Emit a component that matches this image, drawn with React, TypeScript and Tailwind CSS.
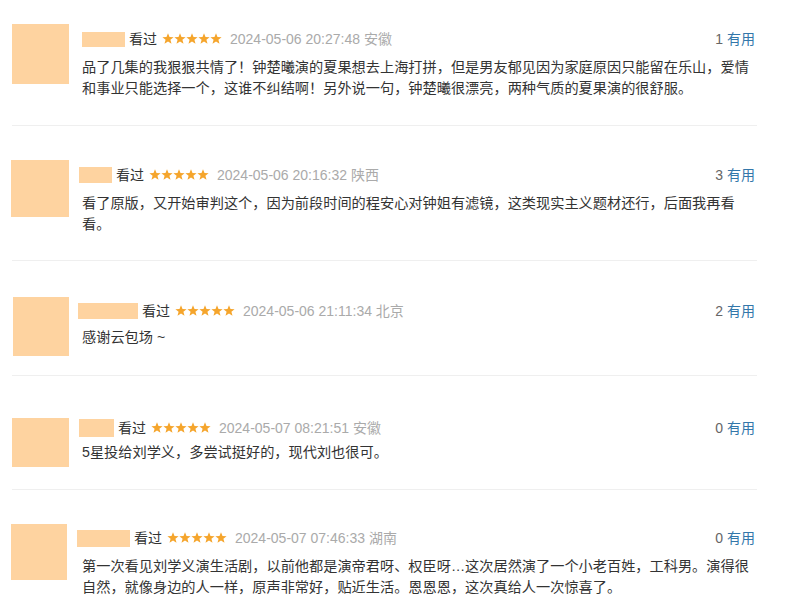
import React from 'react';

const reviews = [
  {
    pt: 'pt-[24px]',
    pb: 'pb-[26px]',
    avatar: 'w-[57px] h-[60px]',
    headMt: 'mt-[5px]',
    textMt: 'mt-[8px]',
    name: 'w-[43px] h-[15px] ml-0',
    date: '2024-05-06 20:27:48',
    loc: '安徽',
    count: 1,
    text: '品了几集的我狠狠共情了！钟楚曦演的夏果想去上海打拼，但是男友郁见因为家庭原因只能留在乐山，爱情和事业只能选择一个，这谁不纠结啊！另外说一句，钟楚曦很漂亮，两种气质的夏果演的很舒服。',
  },
  {
    pt: 'pt-[34px]',
    pb: 'pb-[25px]',
    avatar: 'w-[58px] h-[57px] -ml-[1px]',
    headMt: 'mt-[5px]',
    textMt: 'mt-[8px]',
    name: 'w-[33px] h-[16px] -ml-[3px]',
    date: '2024-05-06 20:16:32',
    loc: '陕西',
    count: 3,
    text: '看了原版，又开始审判这个，因为前段时间的程安心对钟姐有滤镜，这类现实主义题材还行，后面我再看看。',
  },
  {
    // the avatar is taller than the text here, so padding counts from it
    pt: 'pt-[36px]',
    pb: 'pb-[19px]',
    avatar: 'w-[56px] h-[59px] ml-[1px]',
    headMt: 'mt-[4px]',
    textMt: 'mt-[6px]',
    name: 'w-[60px] h-[16px] -ml-[4px]',
    date: '2024-05-06 21:11:34',
    loc: '北京',
    count: 2,
    text: '感谢云包场 ~',
  },
  {
    pt: 'pt-[42px]',
    pb: 'pb-[22px]',
    avatar: 'w-[57px] h-[49px]',
    headMt: 'mt-0',
    textMt: 'mt-[4px]',
    name: 'w-[35px] h-[18px] -ml-[3px]',
    date: '2024-05-07 08:21:51',
    loc: '安徽',
    count: 0,
    text: '5星投给刘学义，多尝试挺好的，现代刘也很可。',
  },
  {
    pt: 'pt-[34px]',
    pb: 'pb-[26px]',
    avatar: 'w-[56px] h-[56px] -ml-[1px]',
    headMt: 'mt-[4px]',
    textMt: 'mt-[8px]',
    name: 'w-[53px] h-[17px] -ml-[5px]',
    date: '2024-05-07 07:46:33',
    loc: '湖南',
    count: 0,
    text: '第一次看见刘学义演生活剧，以前他都是演帝君呀、权臣呀…这次居然演了一个小老百姓，工科男。演得很自然，就像身边的人一样，原声非常好，贴近生活。恩恩恩，这次真给人一次惊喜了。',
  },
];

const Stars = () => (
  <svg width="60" height="12" viewBox="0 0 60 12" className="ml-[5px] shrink-0">
    {[0, 1, 2, 3, 4].map((i) => (
      <polygon
        key={i}
        transform={`translate(${i * 12} 0)`}
        points="6,0.3 7.5,4 11.6,4.2 8.4,6.8 9.5,10.8 6,8.5 2.5,10.8 3.6,6.8 0.4,4.2 4.5,4"
        fill="#f5a52c"
      />
    ))}
  </svg>
);

export default function App() {
  return (
    <div
      className="w-[787px] h-[616px] overflow-hidden bg-white text-[#333]"
      style={{ fontFamily: '"Liberation Sans", "Noto Sans CJK SC", sans-serif' }}
    >
      {reviews.map((r, i) => (
        <div
          key={i}
          className={`ml-[12px] mr-[30px] flex gap-[13px] border-b border-[#efefef] ${r.pt} ${r.pb}`}
        >
          <div className="w-[57px] shrink-0">
            <div className={`bg-[#fed3a0] ${r.avatar}`} />
          </div>
          <div className={`flex-1 min-w-0 ${r.headMt}`}>
            <div className="flex h-[20px] items-center justify-between text-[14px] leading-[20px]">
              <div className="flex items-center">
                <div className={`bg-[#fed3a0] ${r.name}`} />
                <span className="ml-[4px]">看过</span>
                <Stars />
                <span className="ml-[8px] text-[#aaa]">
                  {r.date} {r.loc}
                </span>
              </div>
              <div className="pr-[2px]">
                <span className="text-[#666]">{r.count}</span>{' '}
                <span className="text-[#3377aa]">有用</span>
              </div>
            </div>
            <p className={`text-[14.2px] leading-[21px] text-[#333] ${r.textMt}`}>{r.text}</p>
          </div>
        </div>
      ))}
    </div>
  );
}
